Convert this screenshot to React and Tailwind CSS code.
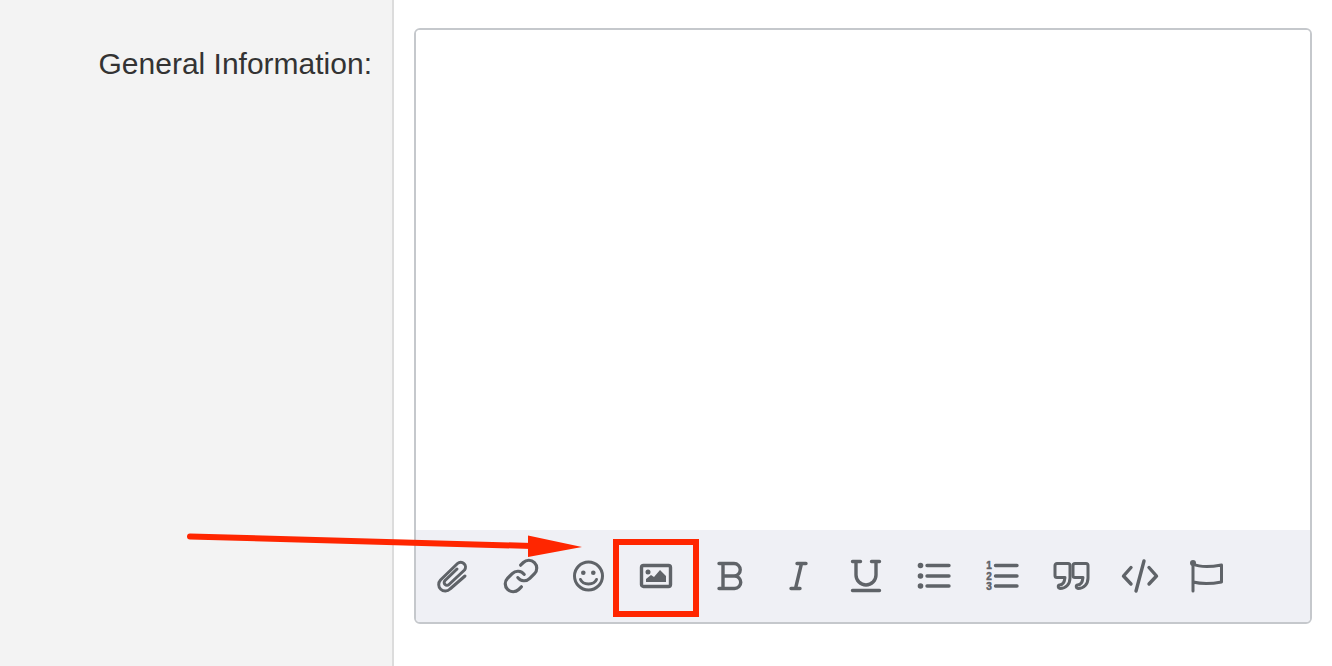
import { Link } from "lucide-react";

const Icon = ({ children, weight = "3.4" }) => (
  <svg
    viewBox="0 0 40 40"
    className="h-10 w-10"
    fill="none"
    stroke="#5f6368"
    strokeWidth={weight}
    strokeLinecap="round"
    strokeLinejoin="round"
  >
    {children}
  </svg>
);

const ToolButton = ({ children, className = "" }) => (
  <button type="button" className={`flex h-10 w-[68px] items-center justify-center ${className}`}>
    {children}
  </button>
);

const App = () => {
  return (
    <div className="relative flex h-[666px] overflow-hidden bg-white font-['Liberation_Sans',sans-serif]">
      <aside className="w-[394px] shrink-0 border-r-2 border-[#dcdcdc] bg-[#f3f3f3] pr-[20px] pt-[46px] text-right">
        <label className="text-[30px] leading-9 text-[#333]">General Information:</label>
      </aside>

      <main className="flex-1 px-5 pt-7">
        <div className="flex h-[596px] flex-col overflow-hidden rounded-md border-2 border-[#c5c8cc]">
          <div className="flex-1 bg-white" />
          <div className="flex h-[92px] items-center bg-[#eff0f5] pl-[3px]">
            <ToolButton>
              <Icon weight="3">
                <path d="M32 20L17 33A6.500 6.500 0 0 1 7.500 24L24.500 7.500A4.800 4.800 0 0 1 31.500 14L16 28.500A2.800 2.800 0 0 1 12 24.500L24 13" />
              </Icon>
            </ToolButton>
            <ToolButton>
              <Link size={38} color="#5f6368" strokeWidth={2} />
            </ToolButton>
            <ToolButton>
              <Icon weight="3">
                <circle cx="19.500" cy="20" r="14" />
                <circle cx="14.300" cy="16.700" r="2.300" fill="#5f6368" stroke="none" />
                <circle cx="24.300" cy="16.700" r="2.300" fill="#5f6368" stroke="none" />
                <path d="M11.500 23.500C14 29.500 25 29.500 27.500 23.500" />
              </Icon>
            </ToolButton>
            <ToolButton>
              <Icon>
                <rect x="4.500" y="9.500" width="29" height="21" rx="2" />
                <circle cx="11" cy="16" r="2.500" fill="#5f6368" stroke="none" />
                <path d="M9 26v-3l5-4 3 2 6-7 6 6v6z" fill="#5f6368" stroke="none" />
              </Icon>
            </ToolButton>
            <ToolButton className="ml-[6px]">
              <Icon>
                <path d="M8 7.500h15a6.250 6.250 0 0 1 0 12.500H12m0 0h11.500a6.250 6.250 0 0 1 0 12.500H8M12 7.500v25" />
              </Icon>
            </ToolButton>
            <ToolButton>
              <Icon>
                <path d="M18 7.500h9M12 32.500h9M22.500 7.500l-6 25" />
              </Icon>
            </ToolButton>
            <ToolButton>
              <Icon>
                <path d="M5.500 5.500h8M24.500 5.500h8M9 5.500V19a10 10 0 0 0 20 0V5.500M5.500 34.500h27" />
              </Icon>
            </ToolButton>
            <ToolButton>
              <Icon>
                <path d="M12 9.500h22M12 20h22M12 30h22" />
                <circle cx="5.500" cy="9.500" r="2.800" fill="#5f6368" stroke="none" />
                <circle cx="5.500" cy="20" r="2.800" fill="#5f6368" stroke="none" />
                <circle cx="5.500" cy="30" r="2.800" fill="#5f6368" stroke="none" />
              </Icon>
            </ToolButton>
            <ToolButton>
              <Icon>
                <path d="M12.500 9.500h21.500M12.500 20h21.500M12.500 30h21.500" />
                <g fill="#5f6368" stroke="#5f6368" strokeWidth="0.5" fontSize="10" fontWeight="700" textAnchor="middle">
                  <text x="6" y="13">1</text>
                  <text x="6" y="23.500">2</text>
                  <text x="6" y="33.500">3</text>
                </g>
              </Icon>
            </ToolButton>
            <ToolButton>
              <Icon weight="3">
                <path d="M6 7.500H17a2 2 0 0 1 2 2V22c0 6-4 10.500-10 10.500a1.800 1.800 0 0 1-.5-3.500c3 0 5-3 5.500-7.500H6a2 2 0 0 1-2-2V9.500a2 2 0 0 1 2-2z" />
                <path d="M24 7.500H35a2 2 0 0 1 2 2V22c0 6-4 10.500-10 10.500a1.800 1.800 0 0 1-.5-3.500c3 0 5-3 5.500-7.500H24a2 2 0 0 1-2-2V9.500a2 2 0 0 1 2-2z" />
              </Icon>
            </ToolButton>
            <ToolButton>
              <Icon>
                <path d="M12 11.500L4.500 20l7.500 8M30 11.500l7.500 8.500-7.500 8M25 5l-8 30" />
              </Icon>
            </ToolButton>
            <ToolButton>
              <Icon weight="3">
                <circle cx="6" cy="7" r="3" fill="#5f6368" stroke="none" />
                <path d="M6 8v27M6 8c8 4 18 3 28.500 1v17C24 28 14 28 6 26" />
              </Icon>
            </ToolButton>
          </div>
        </div>
      </main>

      {/* annotation drawn over the page */}
      <div className="pointer-events-none absolute left-[613px] top-[539px] h-[78px] w-[86px] border-[6px] border-[#ff2600]" />
      <svg className="pointer-events-none absolute left-0 top-0 h-[666px] w-[1332px]" viewBox="0 0 1332 666">
        <path d="M190 536.500L532 546" stroke="#ff2600" strokeWidth="6" strokeLinecap="round" />
        <path d="M528 535.500L582 547L528 557z" fill="#ff2600" />
      </svg>
    </div>
  );
};

export default App;
